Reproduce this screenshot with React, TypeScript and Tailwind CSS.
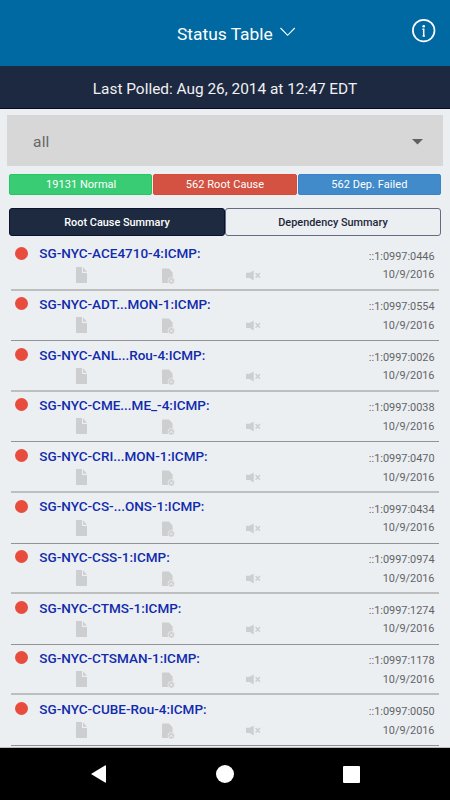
import React from "react";

const rows = [
  { name: "SG-NYC-ACE4710-4:ICMP:", code: "::1:0997:0446" },
  { name: "SG-NYC-ADT...MON-1:ICMP:", code: "::1:0997:0554" },
  { name: "SG-NYC-ANL...Rou-4:ICMP:", code: "::1:0997:0026" },
  { name: "SG-NYC-CME...ME_-4:ICMP:", code: "::1:0997:0038" },
  { name: "SG-NYC-CRI...MON-1:ICMP:", code: "::1:0997:0470" },
  { name: "SG-NYC-CS-...ONS-1:ICMP:", code: "::1:0997:0434" },
  { name: "SG-NYC-CSS-1:ICMP:", code: "::1:0997:0974" },
  { name: "SG-NYC-CTMS-1:ICMP:", code: "::1:0997:1274" },
  { name: "SG-NYC-CTSMAN-1:ICMP:", code: "::1:0997:1178" },
  { name: "SG-NYC-CUBE-Rou-4:ICMP:", code: "::1:0997:0050" },
];

function FileIcon() {
  return (
    <svg className="block h-4 w-[11px]" viewBox="0 0 11 16" fill="#cdcecf">
      <path d="M0 0h6v6h5v10H0z" />
      <path d="M7 0.3L11 4.8H7z" />
    </svg>
  );
}

function FileRemoveIcon() {
  return (
    <svg className="block h-4 w-[13px]" viewBox="0 0 13 16">
      <path d="M0 1.2Q0 0.5 0.7 0.5H7L10.6 4.5V15H0.7Q0 15 0 14.3z" fill="#cdcecf" />
      <circle cx="9.3" cy="12.8" r="3.3" fill="#cdcecf" stroke="#eceff2" strokeWidth="0.7" />
      <path d="M8 11.5l2.6 2.6M10.6 11.5L8 14.1" stroke="#eceff2" strokeWidth="0.9" />
    </svg>
  );
}

function MuteIcon() {
  return (
    <svg className="block h-[11px] w-[15px]" viewBox="0 0 15 11">
      <path d="M0 2.7h3.6L7.7 0.4v10L3.6 8.1H0z" fill="#cdcecf" />
      <path d="M9.6 3.1l4.4 4.6M14 3.1L9.6 7.7" stroke="#cdcecf" strokeWidth="1.5" />
    </svg>
  );
}

export default function App() {
  return (
    <div className="flex h-[800px] w-[450px] flex-col overflow-hidden bg-[#eceff2] font-[Roboto,sans-serif]">
      <header className="flex h-[66px] shrink-0 bg-[#0069a2] text-white">
        <div className="w-[177px]" />
        <h1 className="mt-[21px] w-[103px] whitespace-nowrap text-[17.4px] leading-[26px]">Status Table</h1>
        <svg className="mt-[27px] h-[10px] w-4" viewBox="0 0 16 10" fill="none" stroke="#fff" strokeWidth="1.1">
          <path d="M0.5 1L7.6 8.3L14.8 1" />
        </svg>
        <svg className="mt-[18px] ml-[115px] h-[25px] w-[25px]" viewBox="0 0 25 25">
          <circle cx="12.7" cy="12.6" r="10.8" fill="none" stroke="#fff" strokeWidth="1.7" />
          <circle cx="12.7" cy="8.2" r="1.3" fill="#fff" />
          <path d="M11.4 11.3h1.3M12.7 10.6v8M11.6 18h2.3" fill="none" stroke="#fff" strokeWidth="1.5" />
        </svg>
      </header>
      <div className="h-[43px] shrink-0 border-b border-[#050922] bg-[#1d2841] text-center text-[15.4px] leading-[46px] text-[#f1f1f1]">
        Last Polled: Aug 26, 2014 at 12:47 EDT
      </div>
      <div className="mt-[6px] ml-[7px] flex h-[51px] w-[436px] shrink-0 items-center justify-between bg-[#d7d7d7] pr-[20px] pl-[26px]">
        <span className="pt-[3px] text-[15.5px] leading-5 tracking-[0.2px] text-[#666]">all</span>
        <svg className="mt-[2px] h-[6px] w-[11px]" viewBox="0 0 11 6" fill="#616161"><path d="M0 0h11L5.5 5.5z" /></svg>
      </div>
      <div className="mt-[8px] ml-[9px] grid h-[21px] w-[432px] shrink-0 grid-cols-3 gap-px text-center text-[11px] tracking-[0.05px] text-white">
        <div className="rounded-[2px] border border-[#25c765] bg-[#3acc75] pl-px leading-[19px]">19131 Normal</div>
        <div className="rounded-[2px] border border-[#d84b38] bg-[#d45242] leading-[19px]">562 Root Cause</div>
        <div className="rounded-[2px] border border-[#3884cc] bg-[#428bca] leading-[19px]">562 Dep. Failed</div>
      </div>
      <div className="mt-[13px] ml-[9px] flex h-[28px] w-[432px] shrink-0 text-center text-[10.9px] leading-[27.5px] font-medium">
        <div className="flex-1 rounded-[3px] border border-[#0a1230] bg-[#1d2a40] text-white">Root Cause Summary</div>
        <div className="flex-1 rounded-[3px] border border-[#656b82] text-[#1d2638]">Dependency Summary</div>
      </div>
      <main className="mt-[4.1px] ml-[11px] w-[428px] shrink-0">
        {rows.map((row, i) => (
          <div key={row.name} className="flex h-[50.6px] flex-col">
            <div className="flex min-h-0 flex-1">
              <div className="mt-[6.5px] ml-[4px] h-[13px] w-[13px] rounded-full bg-[#e84c3d]" />
              <div className="ml-[11.3px] w-[261.7px]">
                <div className="mt-[4.3px] h-[18px] text-[13.5px] leading-[18px] font-medium text-[#112bac]">{row.name}</div>
                <div className="mt-[4.3px] ml-[37px] flex">
                  <FileIcon />
                  <div className="mt-[1px] ml-[75px]"><FileRemoveIcon /></div>
                  <div className="mt-[3px] ml-[71px]"><MuteIcon /></div>
                </div>
              </div>
              <div className="mt-[7.5px] flex-1 pr-[4.5px] text-right text-[10.9px] leading-[18.6px] text-[#626467]">
                <div>{row.code}</div>
                <div>10/9/2016</div>
              </div>
            </div>
            <div className={i % 2 ? "h-px shrink-0 bg-[#919397]" : "h-[2px] shrink-0 bg-[#bcbec0]"} />
          </div>
        ))}
      </main>
      <div className="mt-auto flex h-[53px] shrink-0 items-center border-t border-[#babcbf] bg-black">
        <svg className="ml-[90px] h-[18px] w-[17px]" viewBox="0 0 17 18" fill="#fff"><path d="M1 9L15 0.5Q16 0 16 1v16Q16 18 15 17.5z" /></svg>
        <div className="ml-[109px] h-[18px] w-[18px] rounded-full bg-white" />
        <div className="ml-[109px] h-[17px] w-[17px] rounded-[1px] bg-white" />
      </div>
    </div>
  );
}
